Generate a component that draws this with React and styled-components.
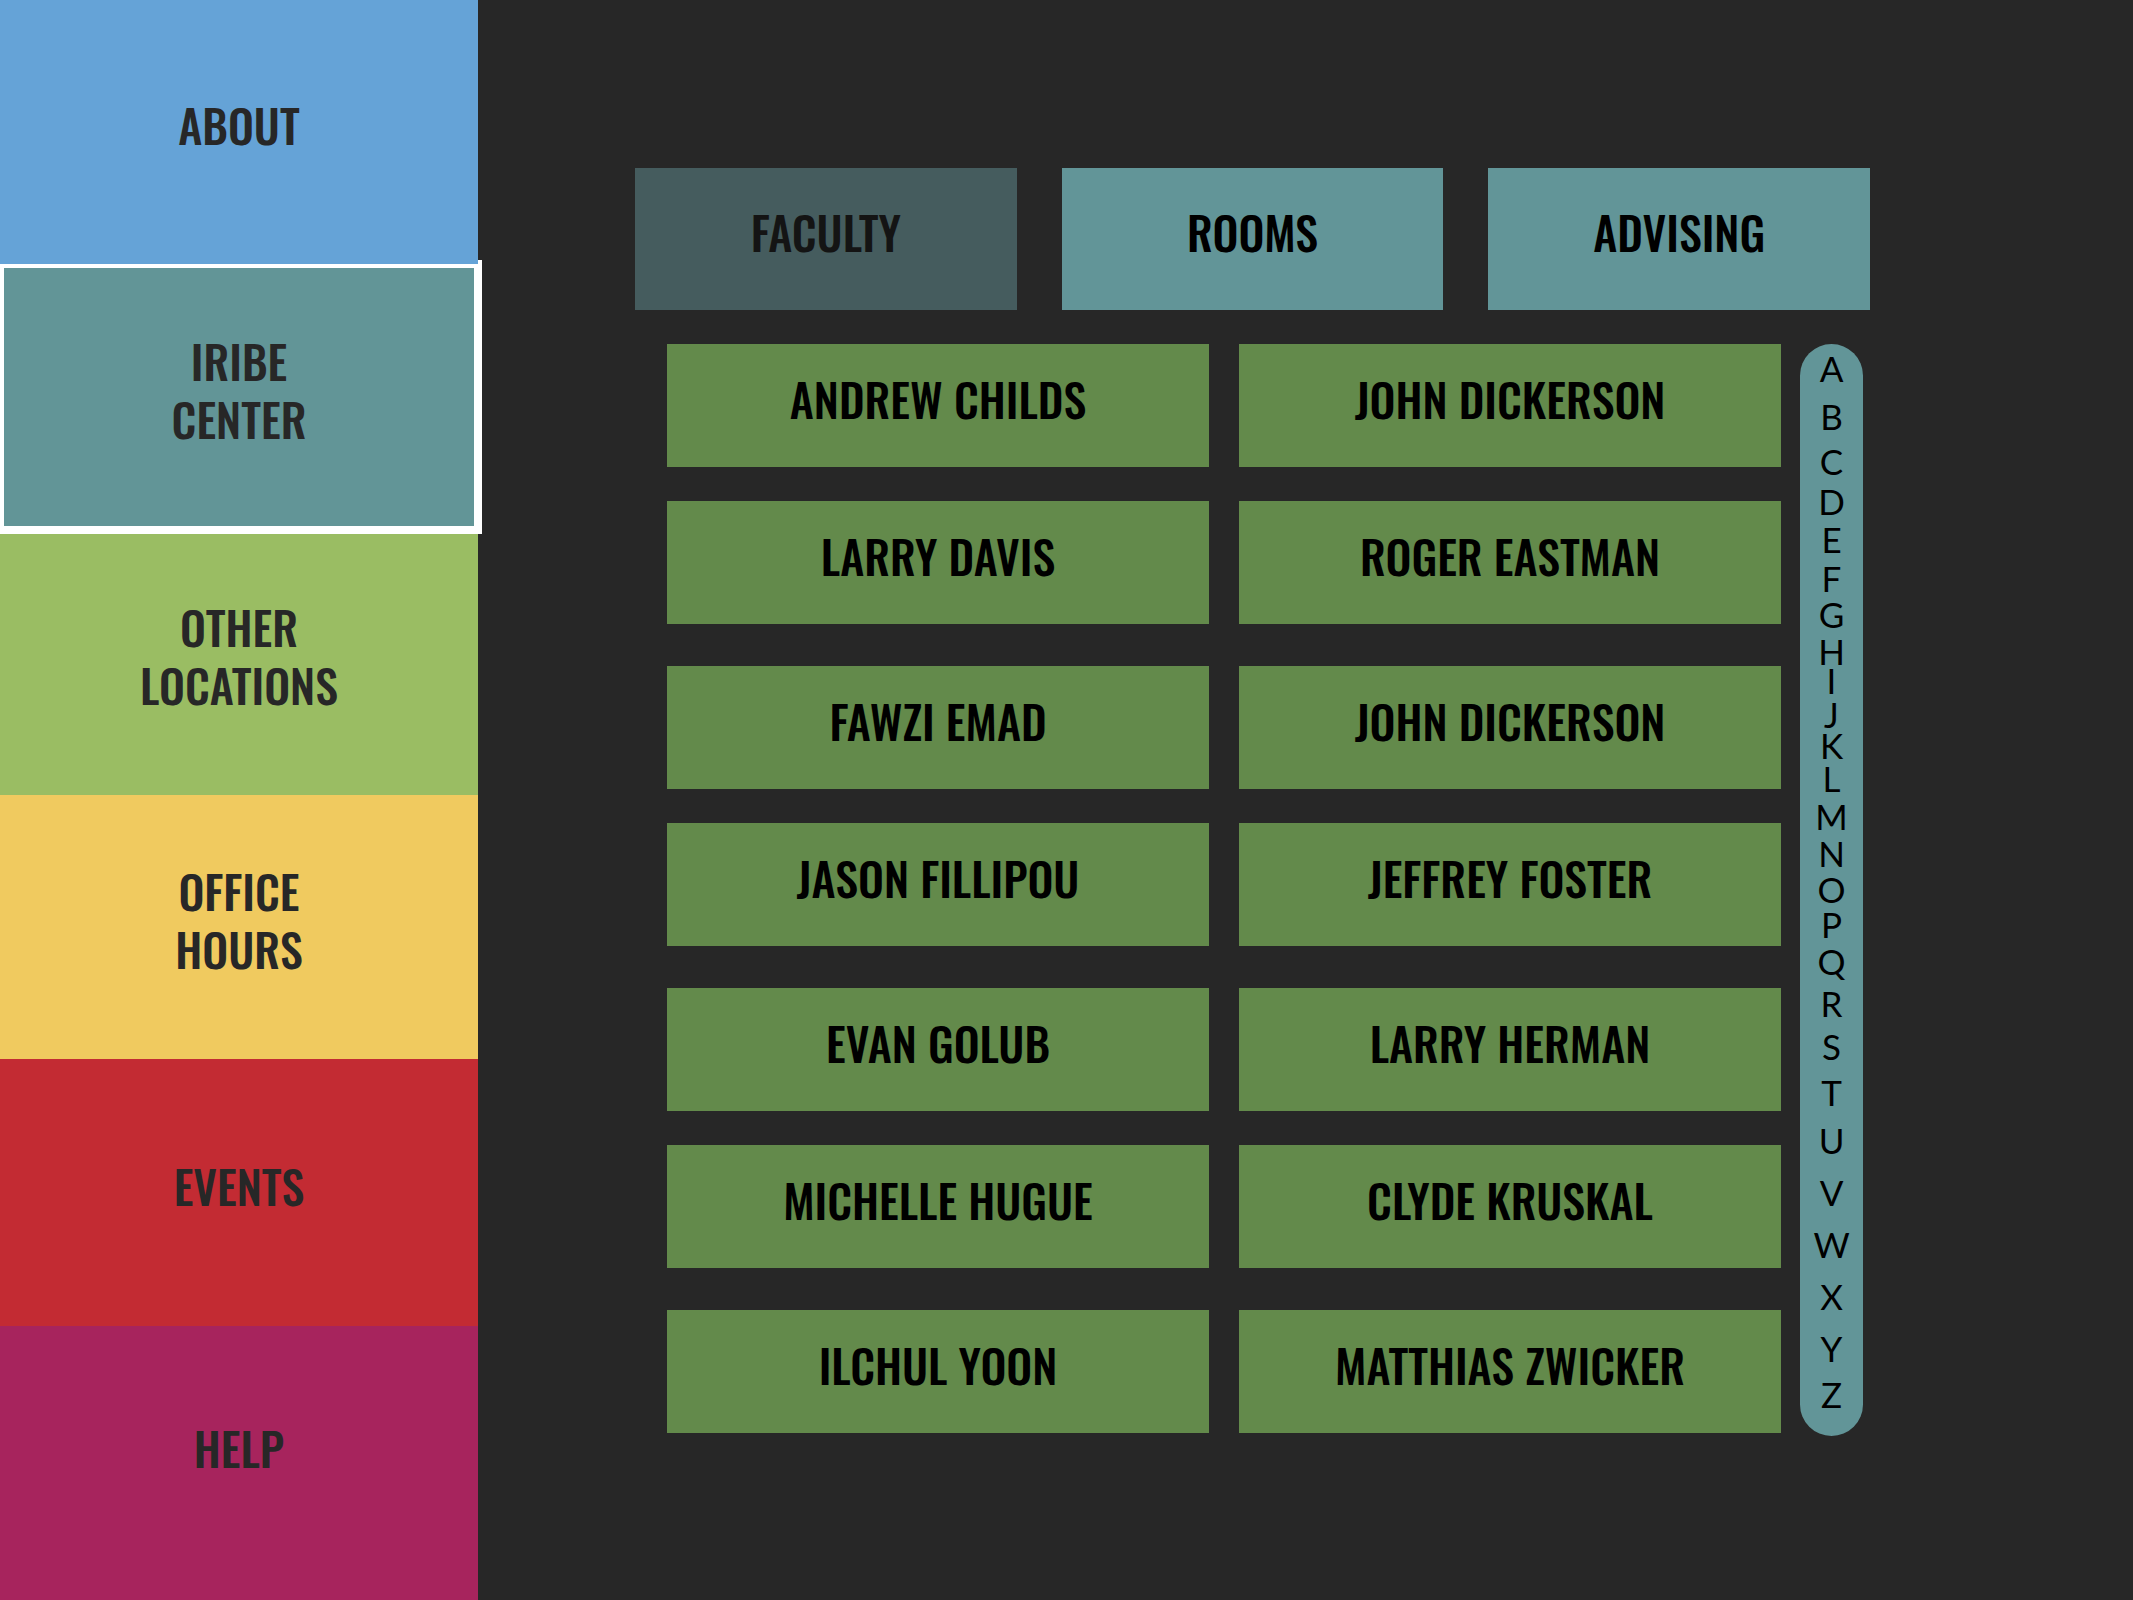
import React, { useState } from "react";
import styled, { createGlobalStyle } from "styled-components";

const GlobalStyle = createGlobalStyle`
  * {
    box-sizing: border-box;
  }

  body {
    margin: 0;
    background: #272727;
  }
`;

const displayFont = `"Oswald", "Open Sans Condensed", "Roboto Condensed", sans-serif`;

const Page = styled.div`
  display: grid;
  grid-template-columns: 478px minmax(0, 1fr);
  min-height: 100vh;
  font-family: ${displayFont};
`;

const Sidebar = styled.nav`
  display: grid;
  grid-template-rows: 264fr 266fr 265fr 264fr 267fr 274fr;
`;

const SidebarButton = styled.button`
  position: relative;
  z-index: ${(p) => p.$layer};
  display: flex;
  align-items: center;
  justify-content: center;
  margin: 0;
  padding: 0 130px 16px;
  border: 0;
  outline: ${(p) => (p.$active ? "8px solid #ffffff" : "none")};
  outline-offset: -4px;
  background: ${(p) => p.$color};
  color: #272727;
  font-family: inherit;
  font-size: 46px;
  font-weight: 500;
  line-height: 58px;
  text-align: center;
  text-transform: uppercase;
  cursor: pointer;

  &:last-child {
    padding-bottom: 32px;
  }
`;

const Main = styled.main`
  padding: 168px 263px 164px 157px;
`;

const Tabs = styled.div`
  display: grid;
  grid-template-columns: repeat(3, minmax(0, 1fr));
  gap: 45px;
  margin-bottom: 34px;
`;

const TileButton = styled.button`
  display: flex;
  align-items: center;
  justify-content: center;
  margin: 0;
  padding: 0 0 16px;
  border: 0;
  color: #000000;
  font-family: inherit;
  font-size: 46px;
  font-weight: 500;
  line-height: 58px;
  text-transform: uppercase;
  white-space: nowrap;
  cursor: pointer;
`;

const Tab = styled(TileButton)`
  height: 142px;
  background: ${(p) => (p.$selected ? "#455c5e" : "#629598")};
  color: ${(p) => (p.$selected ? "#141414" : "#000000")};
`;

const Directory = styled.div`
  display: grid;
  grid-template-columns: minmax(0, 1fr) 63px;
  gap: 19px;
  padding: 0 7px 0 32px;
`;

const People = styled.div`
  display: flex;
  flex-direction: column;
  gap: 42px;
`;

const PeopleGroup = styled.div`
  display: grid;
  grid-template-columns: repeat(2, minmax(0, 1fr));
  gap: 34px 30px;
`;

const Person = styled(TileButton)`
  height: 123px;
  background: #638a4b;
`;

const AlphabetIndex = styled.nav`
  display: flex;
  flex-direction: column;
  align-items: center;
  align-self: start;
  padding: 10px 0 15px;
  border-radius: 32px;
  background: #629598;
`;

const Letter = styled.a`
  flex: none;
  height: ${(p) => p.$pitch}px;
  color: #000000;
  font-family: "Lato", sans-serif;
  font-size: 35px;
  line-height: 29px;
  text-decoration: none;
`;

const sections = [
  { label: "About", color: "#65a3d7", layer: 2 },
  { label: "Iribe Center", color: "#629597", layer: 1, active: true },
  { label: "Other Locations", color: "#9abd63", layer: 0 },
  { label: "Office Hours", color: "#f0ca5f", layer: 0 },
  { label: "Events", color: "#c32b33", layer: 0 },
  { label: "Help", color: "#a7245d", layer: 0 },
];

const tabs = ["Faculty", "Rooms", "Advising"];

const peopleGroups = [
  ["Andrew Childs", "John Dickerson", "Larry Davis", "Roger Eastman"],
  ["Fawzi Emad", "John Dickerson", "Jason Fillipou", "Jeffrey Foster"],
  ["Evan Golub", "Larry Herman", "Michelle Hugue", "Clyde Kruskal"],
  ["Ilchul Yoon", "Matthias Zwicker"],
];

// The index packs its letters closer together around the middle of the alphabet.
const letters = [
  ["A", 48], ["B", 45], ["C", 40], ["D", 38], ["E", 39], ["F", 36],
  ["G", 37], ["H", 29], ["I", 34], ["J", 31], ["K", 33], ["L", 38],
  ["M", 37], ["N", 36], ["O", 35], ["P", 37], ["Q", 42], ["R", 43],
  ["S", 46], ["T", 48], ["U", 52], ["V", 52], ["W", 52], ["X", 52],
  ["Y", 46], ["Z", 41],
];

export default function App() {
  const [tab, setTab] = useState("Faculty");

  return (
    <>
      <GlobalStyle />
      <Page>
        <Sidebar aria-label="Sections">
          {sections.map((s) => (
            <SidebarButton
              key={s.label}
              type="button"
              $color={s.color}
              $layer={s.layer}
              $active={s.active}
              aria-current={s.active ? "page" : undefined}
            >
              {s.label}
            </SidebarButton>
          ))}
        </Sidebar>
        <Main>
          <Tabs role="tablist">
            {tabs.map((name) => (
              <Tab
                key={name}
                type="button"
                role="tab"
                aria-selected={tab === name}
                $selected={tab === name}
                onClick={() => setTab(name)}
              >
                {name}
              </Tab>
            ))}
          </Tabs>
          <Directory>
            <People>
              {peopleGroups.map((group, g) => (
                <PeopleGroup key={g}>
                  {group.map((name) => (
                    <Person key={name} type="button">
                      {name}
                    </Person>
                  ))}
                </PeopleGroup>
              ))}
            </People>
            <AlphabetIndex aria-label="Alphabet">
              {letters.map(([letter, pitch]) => (
                <Letter key={letter} href={`#${letter}`} $pitch={pitch}>
                  {letter}
                </Letter>
              ))}
            </AlphabetIndex>
          </Directory>
        </Main>
      </Page>
    </>
  );
}
